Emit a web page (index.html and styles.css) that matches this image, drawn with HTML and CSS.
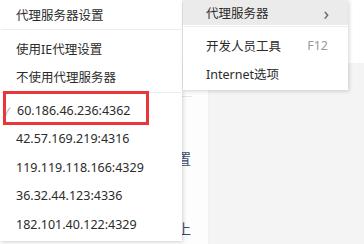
FILE: index.html
```html
<!DOCTYPE html>
<html lang="zh-CN">
<head>
    <meta charset="UTF-8">
    <title>代理服务器</title>
    <link rel="stylesheet" href="styles.css">
</head>
<body>
    <div class="page">
        <div class="page-top"></div>
        <div class="page-body">
            <div class="side">
                <div class="side-line"></div>
                <div class="side-item side-item-first">置</div>
                <div class="side-item">上</div>
            </div>
            <div class="content"></div>
        </div>

        <!-- main context menu -->
        <div class="menu menu-main">
            <div class="menu-item">代理服务器设置</div>
            <div class="menu-sep"></div>
            <div class="menu-item">使用IE代理设置</div>
            <div class="menu-item">不使用代理服务器</div>
            <div class="menu-sep"></div>
            <div class="menu-item checked">
                <span class="check">&#10003;</span>60.186.46.236:4362
                <span class="mark"></span>
            </div>
            <div class="menu-item">42.57.169.219:4316</div>
            <div class="menu-item">119.119.118.166:4329</div>
            <div class="menu-item">36.32.44.123:4336</div>
            <div class="menu-item">182.101.40.122:4329</div>
        </div>

        <!-- sub menu -->
        <div class="menu menu-sub">
            <div class="menu-item active">代理服务器<span class="arrow">&#8250;</span></div>
            <div class="menu-sep"></div>
            <div class="menu-item">开发人员工具<span class="key">F12</span></div>
            <div class="menu-item">Internet选项</div>
        </div>
    </div>
</body>
</html>
```

FILE: styles.css
```css
* {
    margin: 0;
    padding: 0;
    box-sizing: border-box;
}

body {
    font-family: "Noto Sans", "Noto Sans CJK SC", sans-serif;
    font-size: 12.5px;
    color: #2b2b2b;
    background-color: #ffffff;
    overflow: hidden;
}

.page {
    position: relative;
    width: 364px;
    height: 244px;
}

.page-top {
    height: 63px;
    background-color: #ffffff;
}

.page-body {
    display: flex;
    height: 181px;
}

.side {
    width: 209px;
    background-color: #fdfdfd;
    border-right: 1px solid #f1f1f1;
    padding-top: 33px;
    overflow: hidden;
}

.side-line {
    width: 192px;
    height: 1px;
    background-color: #e6e6e6;
}

.side-item {
    width: 191px;
    text-align: right;
    height: 28px;
    line-height: 28px;
    font-size: 14px;
    color: #3a4a6a;
}

.side-item-first {
    margin-top: 48px;
}

.side-item + .side-item {
    margin-top: 42px;
}

.content {
    flex: 1;
    background-color: #f4f4f4;
}

.menu {
    position: absolute;
    background-color: #ffffff;
    box-shadow: 1px 1px 4px rgba(0, 0, 0, 0.18);
}

.menu-main {
    left: 0;
    top: 0;
    width: 182px;
    padding-bottom: 2px;
}

.menu-sub {
    left: 183px;
    top: 0;
    width: 165px;
    height: 90px;
}

.menu-item {
    position: relative;
    display: flex;
    align-items: center;
    height: 28px;
    padding-left: 16px;
    padding-right: 20px;
    white-space: nowrap;
}

.menu-main .menu-item + .menu-item {
    height: 28.5px;
}

.menu-main .checked {
    padding-left: 17px;
}

.menu-sep {
    height: 6px;
    margin: 0 1px;
    background: linear-gradient(#ffffff 1px, #ececec 1px, #ececec 2px, #ffffff 2px);
}

.check {
    position: absolute;
    left: 3px;
    top: 6px;
    font-size: 11px;
    color: #a8a8a8;
}

.mark {
    position: absolute;
    left: 3px;
    top: -6px;
    width: 146px;
    height: 34px;
    border: 3px solid #e8363a;
}

.menu-sub .menu-item {
    padding-left: 23px;
}

.menu-sub .active {
    height: 25px;
    background-color: #ebebeb;
}

.arrow {
    margin-left: auto;
    font-size: 18px;
    color: #666666;
    margin-right: -1px;
}

.key {
    margin-left: auto;
    color: #9a9a9a;
}
```
